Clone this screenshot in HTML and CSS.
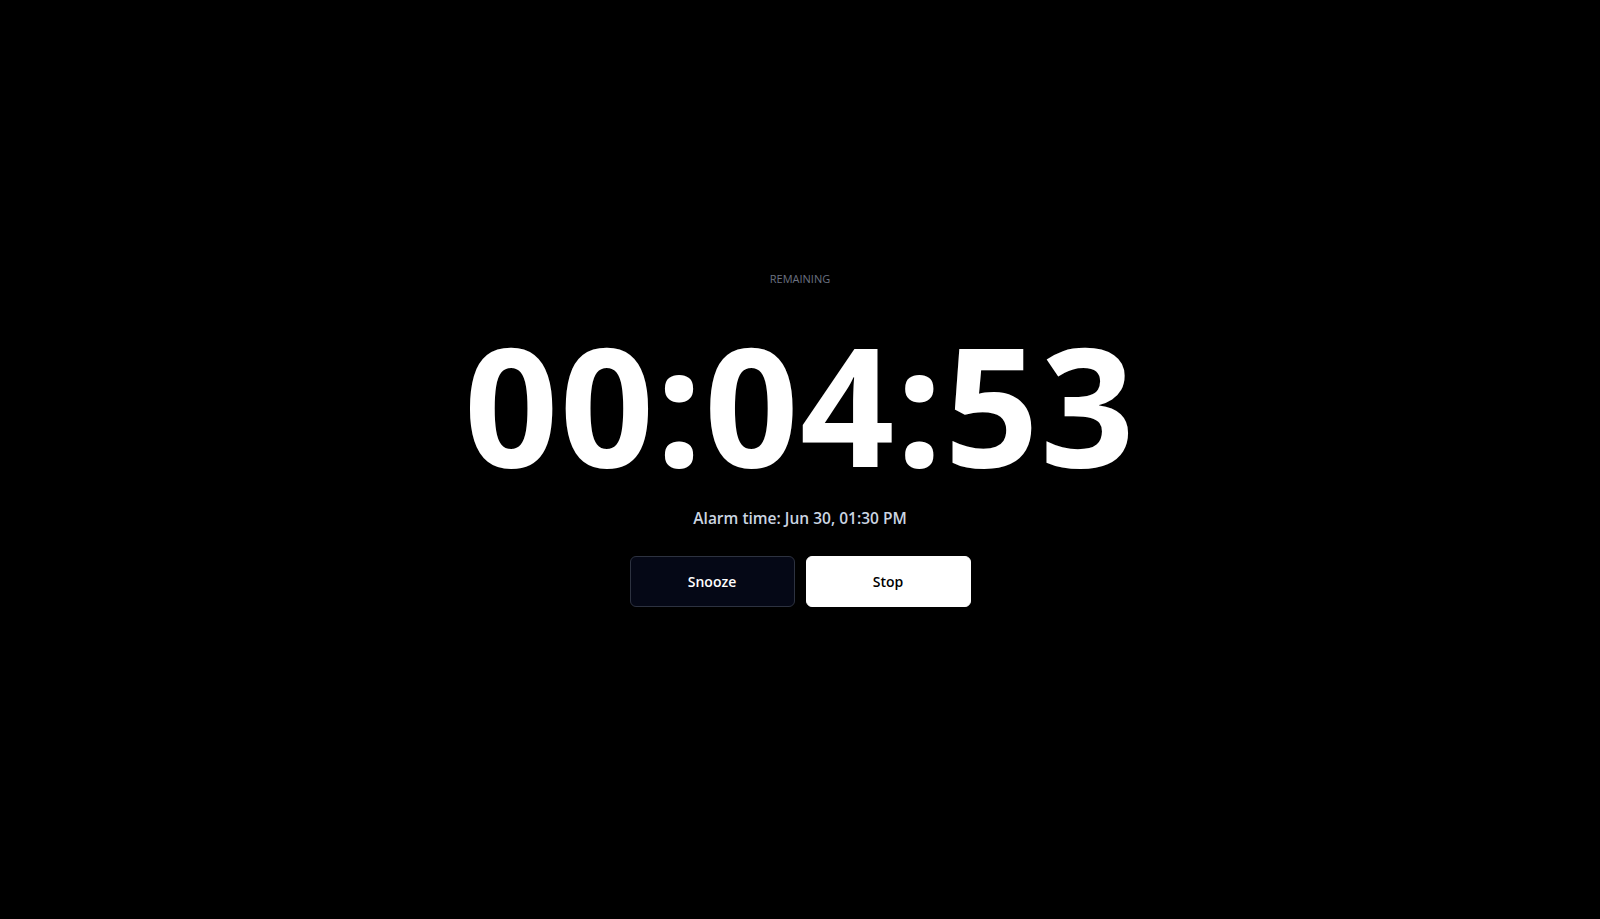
FILE: index.html
```html
<!DOCTYPE html>
<html lang="en">
<head>
<meta charset="utf-8">
<title>Alarm</title>
<link rel="stylesheet" href="styles.css">
</head>
<body>
<main class="screen">
  <div class="label">REMAINING</div>
  <div class="countdown">00:04:53</div>
  <div class="alarm-time">Alarm time: Jun 30, 01:30 PM</div>
  <div class="actions">
    <button class="btn btn-dark">Snooze</button>
    <button class="btn btn-light">Stop</button>
  </div>
</main>
</body>
</html>
```
FILE: styles.css
```css
html, body {
  margin: 0;
  padding: 0;
  background: #000;
  height: 100%;
}
body {
  font-family: "Open Sans", "Noto Sans", sans-serif;
  color: #fff;
}
.screen {
  min-height: 100vh;
  box-sizing: border-box;
  display: flex;
  flex-direction: column;
  align-items: center;
  justify-content: center;
  padding-bottom: 41px;
}
.label {
  font-size: 11px;
  color: #6b7280;
  line-height: 16px;
}
.countdown {
  font-size: 165px;
  font-weight: 700;
  line-height: 180px;
  margin-top: 26px;
  letter-spacing: 1.5px;
}
.alarm-time {
  margin-top: 13px;
  font-size: 15.5px;
  font-weight: 600;
  color: #cbd5e1;
  line-height: 24px;
}
.actions {
  display: flex;
  gap: 11px;
  margin-top: 26px;
}
.btn {
  width: 165px;
  height: 51px;
  border-radius: 6px;
  font-family: inherit;
  font-size: 14px;
  font-weight: 600;
  cursor: pointer;
}
.btn-dark {
  background: #050816;
  color: #fff;
  border: 1px solid #2d3240;
}
.btn-light {
  background: #fff;
  color: #000;
  border: 1px solid #fff;
}
```
